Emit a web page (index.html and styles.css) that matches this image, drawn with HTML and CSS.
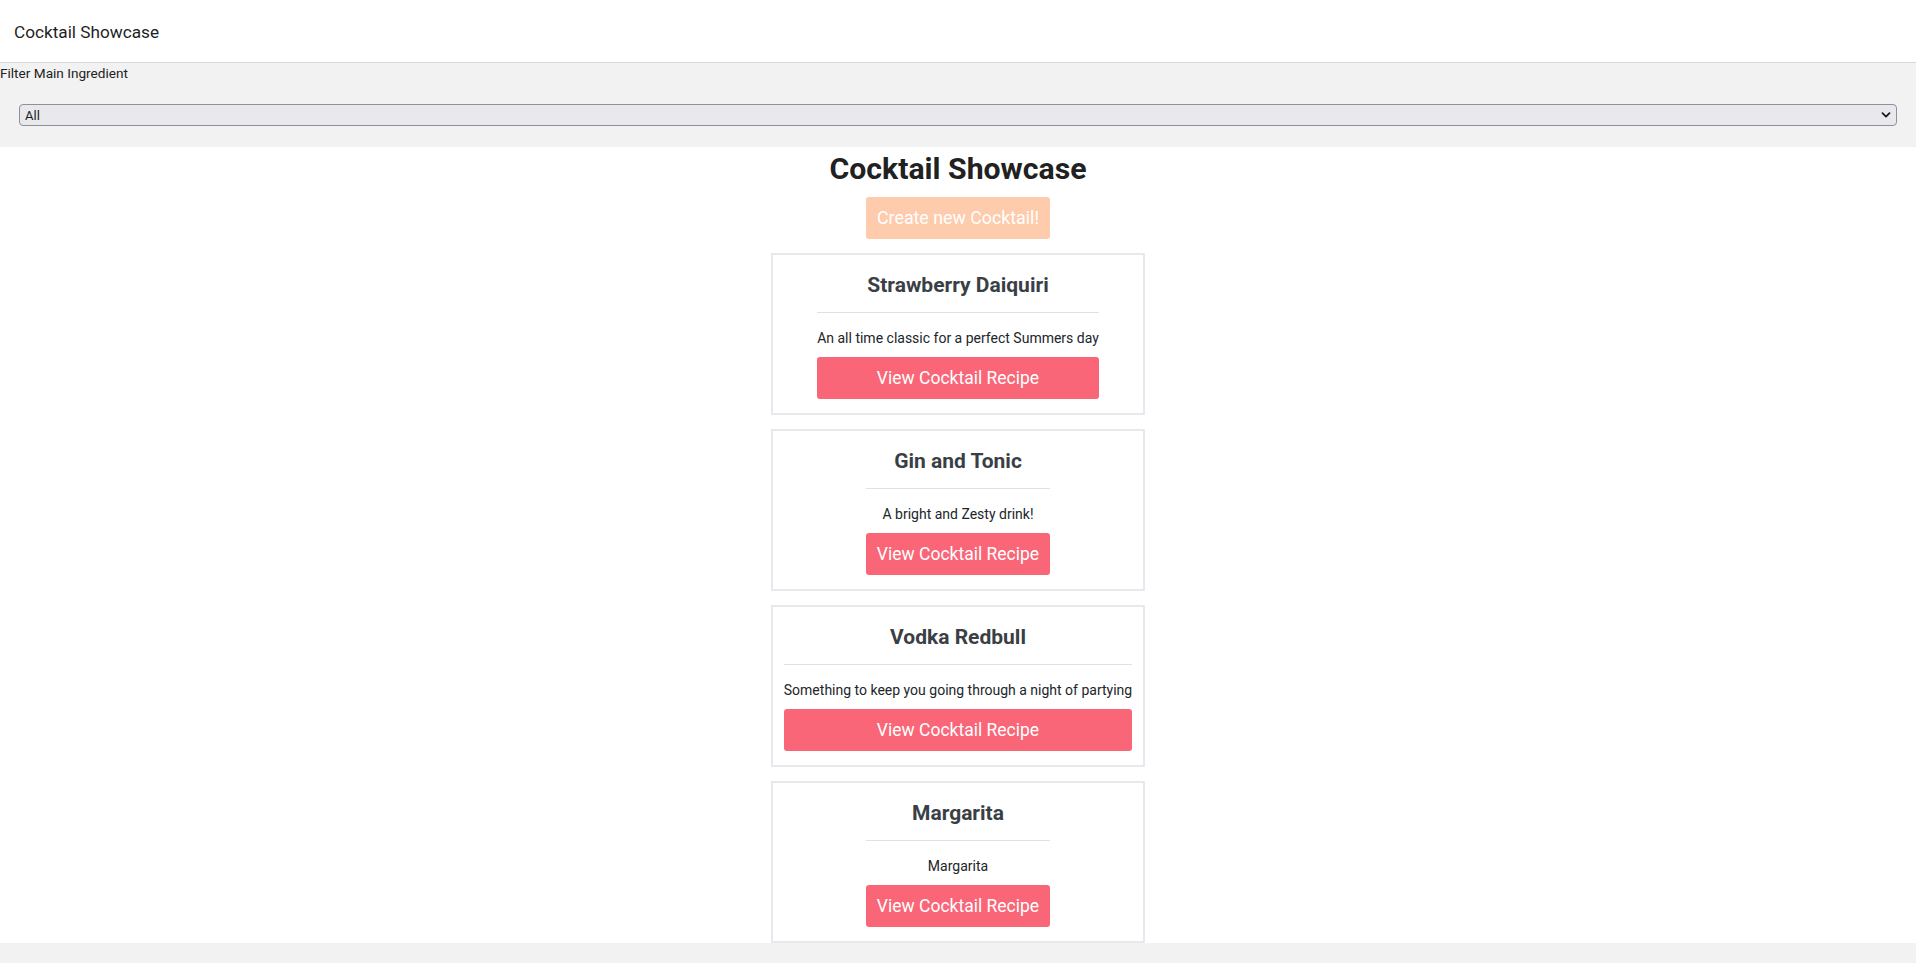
FILE: index.html
```html
<!DOCTYPE html>
<html lang="en">
<head>
<meta charset="utf-8">
<title>Cocktail Showcase</title>
<link rel="stylesheet" href="styles.css">
</head>
<body>
<header class="topbar">
  <span class="brand">Cocktail Showcase</span>
</header>
<section class="filter">
  <label class="filter-label" for="ingredient">Filter Main Ingredient</label>
  <div class="select-wrap">
    <select id="ingredient" class="select">
      <option>All</option>
    </select>
    <svg class="chevron" width="10" height="6" viewBox="0 0 10 6" aria-hidden="true"><path d="M1.5 1.2 L5 4.6 L8.5 1.2" fill="none" stroke="#1b1b1b" stroke-width="1.8" stroke-linecap="round" stroke-linejoin="round"/></svg>
  </div>
</section>
<main class="main">
  <h1 class="title">Cocktail Showcase</h1>
  <button class="btn btn-create" type="button">Create new Cocktail!</button>
  <div class="cards">
    <article class="card">
      <div class="card-body">
        <h3 class="card-title">Strawberry Daiquiri</h3>
        <hr class="card-rule">
        <p class="card-text">An all time classic for a perfect Summers day</p>
        <button class="btn btn-view" type="button">View Cocktail Recipe</button>
      </div>
    </article>
    <article class="card">
      <div class="card-body">
        <h3 class="card-title">Gin and Tonic</h3>
        <hr class="card-rule">
        <p class="card-text">A bright and Zesty drink!</p>
        <button class="btn btn-view" type="button">View Cocktail Recipe</button>
      </div>
    </article>
    <article class="card">
      <div class="card-body">
        <h3 class="card-title">Vodka Redbull</h3>
        <hr class="card-rule">
        <p class="card-text">Something to keep you going through a night of partying</p>
        <button class="btn btn-view" type="button">View Cocktail Recipe</button>
      </div>
    </article>
    <article class="card">
      <div class="card-body">
        <h3 class="card-title">Margarita</h3>
        <hr class="card-rule">
        <p class="card-text">Margarita</p>
        <button class="btn btn-view" type="button">View Cocktail Recipe</button>
      </div>
    </article>
  </div>
</main>
</body>
</html>
```
FILE: styles.css
```css
* { box-sizing: border-box; }

html, body {
  margin: 0;
  padding: 0;
}

body {
  background: #f2f2f2;
  font-family: Roboto, "Liberation Sans", sans-serif;
  color: #212529;
}

.topbar {
  height: 63px;
  background: #ffffff;
  border-bottom: 1px solid #d9d9d9;
  display: flex;
  align-items: center;
  padding: 1px 0 0 14px;
}

.brand {
  font-size: 17.2px;
  color: #1f1f1f;
}

.filter {
  background: #f2f2f2;
  padding: 0 0 21px;
}

.filter-label {
  display: block;
  font-size: 13.6px;
  line-height: 20px;
  color: #222;
}

.select-wrap {
  position: relative;
  margin: 21px 19px 0;
}

.select {
  display: block;
  width: 100%;
  height: 22px;
  margin: 0;
  padding: 0 24px 0 5px;
  appearance: none;
  -webkit-appearance: none;
  background: #e9e9ed;
  border: 1px solid #8f8f9d;
  border-radius: 4px;
  font-family: Roboto, "Liberation Sans", sans-serif;
  font-size: 13px;
  color: #1b1b1b;
}

.chevron {
  position: absolute;
  right: 6px;
  top: 8px;
}

.main {
  background: #ffffff;
  padding-top: 4px;
  display: flex;
  flex-direction: column;
  align-items: center;
}

.title {
  margin: 0;
  font-size: 30.2px;
  line-height: 36px;
  font-weight: 700;
  color: #212121;
}

.btn {
  border: 0;
  border-radius: 3px;
  color: #ffffff;
  font-family: Roboto, "Liberation Sans", sans-serif;
  height: 42px;
  line-height: 42px;
  padding: 0 11px;
  cursor: pointer;
}

.btn-create {
  margin-top: 10px;
  background: #fecbac;
  font-size: 17.8px;
}

.cards {
  margin-top: 14px;
  display: flex;
  flex-direction: column;
  gap: 14px;
  width: fit-content;
}

.card {
  border: 2px solid #e6eaee;
  background: #ffffff;
  padding: 17px 11px 14px;
}

.card-body {
  width: fit-content;
  margin: 0 auto;
  display: flex;
  flex-direction: column;
  align-items: stretch;
  text-align: center;
}

.card-title {
  margin: 0;
  font-size: 21px;
  line-height: 26px;
  font-weight: 700;
  color: #3a3f45;
  white-space: nowrap;
}

.card-rule {
  margin: 14px 0 0;
  border: 0;
  border-top: 1px solid #dee2e6;
  height: 0;
}

.card-text {
  margin: 15px 0 0;
  font-size: 14px;
  line-height: 21px;
  color: #212529;
  white-space: nowrap;
}

.btn-view {
  margin-top: 8px;
  background: #f96677;
  font-size: 17.5px;
  white-space: nowrap;
}
```
